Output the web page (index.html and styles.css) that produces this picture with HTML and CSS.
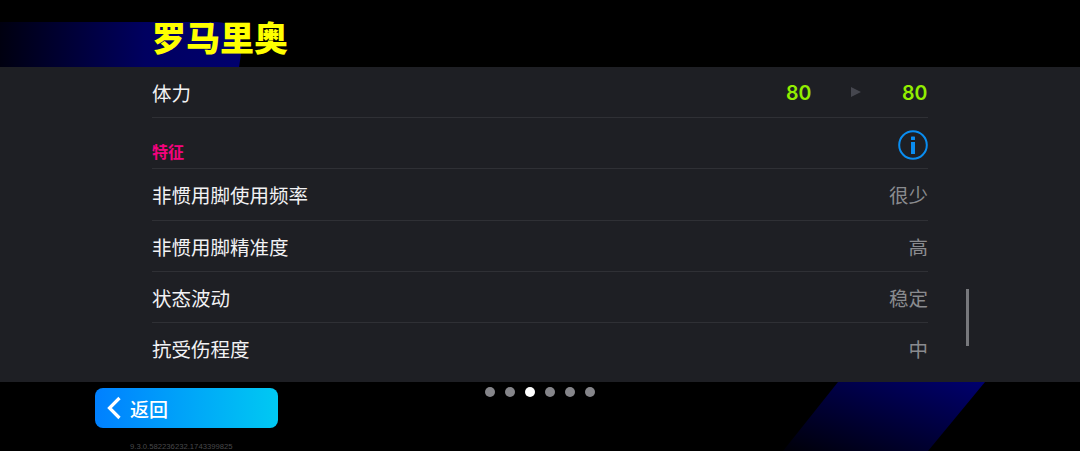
FILE: index.html
```html
<!DOCTYPE html>
<html lang="zh-CN">
<head>
    <meta charset="UTF-8">
    <title>罗马里奥</title>
    <link rel="stylesheet" href="styles.css">
</head>
<body>
    <div class="page">
        <svg class="deco deco-top" width="243" height="45" viewBox="0 0 243 45">
            <defs>
                <linearGradient id="fadeTop" x1="0" x2="1" y1="0" y2="0">
                    <stop offset="0" stop-color="#000010"/>
                    <stop offset="0.6" stop-color="#000060"/>
                    <stop offset="1" stop-color="#00006e"/>
                </linearGradient>
            </defs>
            <path d="M0 0H216C232 0 243 12 242 26L239 45H0Z" fill="url(#fadeTop)"/>
        </svg>
        <svg class="deco deco-bottom" width="202" height="69" viewBox="0 0 202 69">
            <defs>
                <linearGradient id="fadeBottom" x1="0" x2="1" y1="1" y2="0">
                    <stop offset="0" stop-color="#000008"/>
                    <stop offset="1" stop-color="#00006e"/>
                </linearGradient>
            </defs>
            <path d="M55 0H202L145 69H0Z" fill="url(#fadeBottom)"/>
        </svg>

        <header class="head">
            <h1 class="title">罗马里奥</h1>
        </header>

        <main class="panel">
            <div class="row">
                <span class="label">体力</span>
                <div class="compare">
                    <span class="num">80</span>
                    <span class="tri"></span>
                    <span class="num">80</span>
                </div>
            </div>
            <div class="row">
                <span class="section">特征</span>
                <svg class="info" width="30" height="30" viewBox="0 0 30 30">
                    <circle cx="15" cy="15" r="13.8" fill="none" stroke="#0a8df0" stroke-width="2"/>
                    <rect x="13" y="6.5" width="4" height="3.6" rx="0.6" fill="#0a8df0"/>
                    <rect x="13" y="12" width="4" height="12" fill="#0a8df0"/>
                </svg>
            </div>
            <div class="row row-tall"><span class="label">非惯用脚使用频率</span><span class="val">很少</span></div>
            <div class="row"><span class="label">非惯用脚精准度</span><span class="val">高</span></div>
            <div class="row"><span class="label">状态波动</span><span class="val">稳定</span></div>
            <div class="row row-last"><span class="label">抗受伤程度</span><span class="val">中</span></div>
            <div class="scrollbar"></div>
        </main>

        <footer class="foot">
            <div class="foot-left">
                <button class="back">
                    <svg width="16" height="24" viewBox="0 0 16 24">
                        <path d="M13.5 2L3.5 12L13.5 22" fill="none" stroke="#fff" stroke-width="3.2"/>
                    </svg>
                    <span>返回</span>
                </button>
                <div class="version">9.3.0.582236232.1743399825</div>
            </div>
            <div class="dots">
                <span class="dot"></span>
                <span class="dot"></span>
                <span class="dot on"></span>
                <span class="dot"></span>
                <span class="dot"></span>
                <span class="dot"></span>
            </div>
        </footer>
    </div>
</body>
</html>
```

FILE: styles.css
```css
* { box-sizing: border-box; }
html, body { margin: 0; padding: 0; background: #000; }
body { font-family: "Noto Sans CJK SC", "Noto Sans", sans-serif; }
.page { position: relative; width: 1080px; height: 451px; overflow: hidden; background: #000; }

.deco { position: absolute; }
.deco-top { left: 0; top: 22px; }
.deco-bottom { left: 783px; top: 382px; }

.head { position: relative; height: 67px; padding: 15px 0 0 152px; }
.title { margin: 0; font-size: 34px; line-height: 44px; font-weight: 900; color: #ffff00; }

.panel { position: relative; height: 315px; padding: 0 152px; background: #1e1f24; }
.row { display: flex; justify-content: space-between; align-items: center; height: 51px; border-bottom: 1px solid #2f3035; }
.row-tall { height: 52px; }
.row-last { border-bottom: 0; }
.label { font-size: 19.5px; color: #f2f2f4; }
.val { font-size: 19.5px; color: #8a8b8f; }

.compare { display: flex; align-items: center; margin: 2px 1px 0 0; }
.num { width: 25px; font-family: Inter, sans-serif; font-size: 19.5px; font-weight: 600; color: #92ee00; text-align: right; }
.tri { width: 0; height: 0; margin: 0 41px 2px 40px; border-left: 10px solid #45464e; border-top: 5.5px solid transparent; border-bottom: 5.5px solid transparent; }

.section { align-self: flex-end; margin-bottom: 6px; font-size: 16px; line-height: 22px; font-weight: 700; color: #f5027e; }
.info { margin: 4px 0 0 0; }

.scrollbar { position: absolute; left: 966px; top: 222px; width: 3px; height: 57px; background: #77787c; }

.foot { display: flex; align-items: flex-start; padding-left: 95px; }
.foot-left { width: 183px; padding-top: 6px; }
.back { display: flex; align-items: center; gap: 8px; width: 183px; height: 40px; padding: 0 0 0 11px; border: 0; border-radius: 8px; background: linear-gradient(90deg, #0080ff, #00c9f2); color: #fff; font-family: inherit; font-size: 19px; font-weight: 500; }
.version { margin: 14px 0 0 35px; font-family: "Liberation Sans", sans-serif; font-size: 7.7px; line-height: 10px; color: #48484b; white-space: nowrap; }

.dots { display: flex; gap: 10.2px; margin: 5px 0 0 206.5px; }
.dot { width: 10px; height: 10px; border-radius: 50%; background: #85858a; }
.dot.on { background: #fff; }
```
